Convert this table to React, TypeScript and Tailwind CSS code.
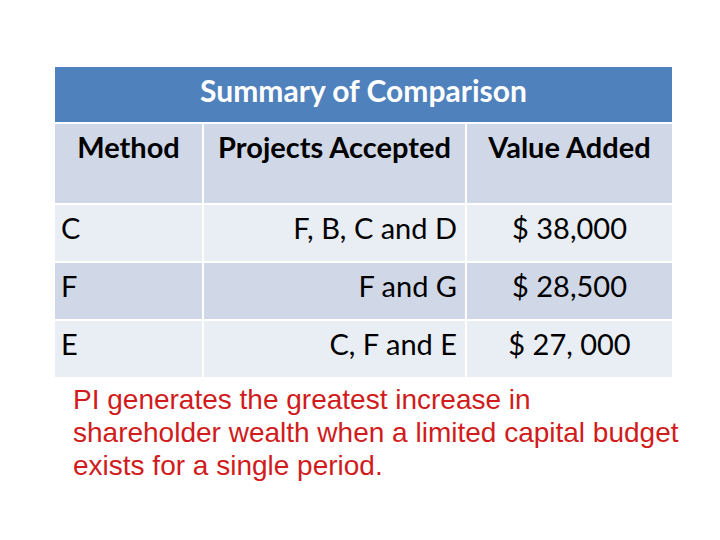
export default function App() {
  const rows = [
    { method: "C", projects: "F, B, C and D", value: "$ 38,000", bg: "bg-[#e9edf4]" },
    { method: "F", projects: "F and G", value: "$ 28,500", bg: "bg-[#d0d8e8]" },
    { method: "E", projects: "C, F and E", value: "$ 27, 000", bg: "bg-[#e9edf4]" },
  ];

  return (
    <div className="w-[720px] h-[540px] bg-white pt-[67px] pl-[55px]" style={{ fontFamily: "Lato, 'Open Sans', sans-serif" }}>
      <div className="grid w-[617px] grid-cols-[147px_261px_205px] gap-[2px] bg-white text-black">
        <div className="col-span-3 h-[55px] bg-[#4f81bd] pt-[8px] text-center leading-[30px] text-white font-bold text-[30px]">
          Summary of Comparison
        </div>

        <div className="h-[79px] bg-[#d0d8e8] pt-[8px] text-center leading-[30px] font-bold text-[29px]">Method</div>
        <div className="h-[79px] bg-[#d0d8e8] pt-[8px] text-center leading-[30px] font-bold text-[29px]">Projects Accepted</div>
        <div className="h-[79px] bg-[#d0d8e8] pt-[8px] text-center leading-[30px] font-bold text-[29px]">Value Added</div>

        {rows.map((r) => (
          <div key={r.method} className="contents">
            <div className={`${r.bg} h-[56px] pl-[6px] pt-[8px] leading-[30px] text-[29px]`}>{r.method}</div>
            <div className={`${r.bg} h-[56px] pr-[8px] pt-[8px] leading-[30px] text-right text-[29px]`}>{r.projects}</div>
            <div className={`${r.bg} h-[56px] pt-[8px] leading-[30px] text-center text-[29px]`}>{r.value}</div>
          </div>
        ))}
      </div>

      <p
        className="mt-[6px] ml-[18px] w-[640px] text-[28px] leading-[33px] text-[#d01c1c]"
        style={{ fontFamily: "'Liberation Sans', Arial, sans-serif" }}
      >
        PI generates the greatest increase in
        <br />
        shareholder wealth when a limited capital budget
        <br />
        exists for a single period.
      </p>
    </div>
  );
}
